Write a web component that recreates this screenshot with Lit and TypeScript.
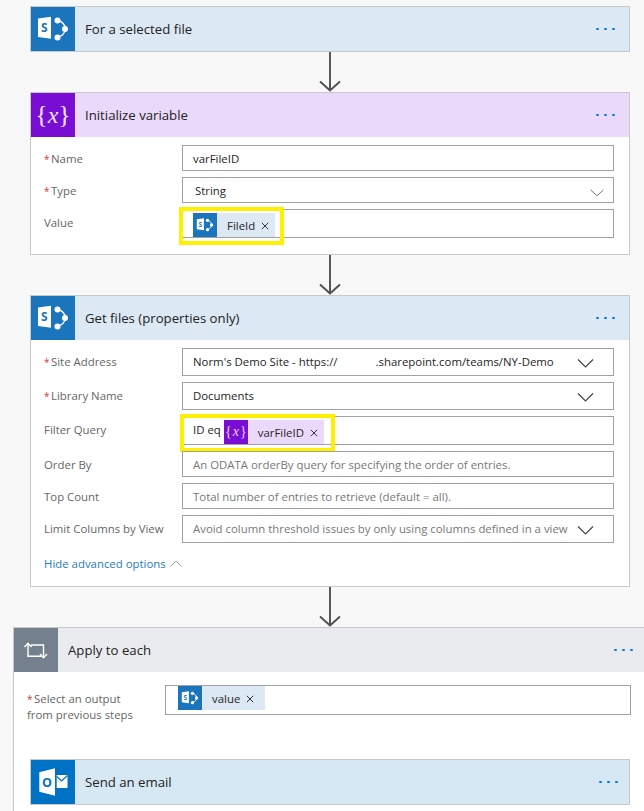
import { LitElement, html, css, svg } from "lit";
import { customElement } from "lit/decorators.js";

const sp = svg`<path d="M7 11.5 L20 9.8 V31.8 L7 30 Z" fill="#fff"/>
<text x="13.4" y="25" font-family="Open Sans, sans-serif" font-size="12" font-weight="700" text-anchor="middle" fill="#1a75bc">S</text>
<path d="M27 13.5 A 10 10 0 0 1 34.5 22 A 10 10 0 0 1 27 30" fill="none" stroke="#fff" stroke-width="1.4"/>
<circle cx="26.5" cy="13.5" r="3" fill="#fff"/><circle cx="34" cy="22" r="3" fill="#fff"/><circle cx="26.5" cy="30.5" r="3" fill="#fff"/>`;
const outlook = svg`<path d="M8.3 12.3 L24 8.3 V35.7 L8.3 31.7 Z" fill="#fff"/>
<text x="16" y="27" font-family="Open Sans, sans-serif" font-size="12.5" font-weight="700" text-anchor="middle" fill="#0072c6">O</text>
<rect x="25.7" y="15" width="10.8" height="13" fill="#fff"/><path d="M25.7 16.5 L30.6 21 L36.5 15.5" fill="none" stroke="#0072c6" stroke-width="1.2"/>`;
const loop = svg`<path d="M14 16 V28.2 H27.5 M17 17 H29.5 V29" fill="none" stroke="#fff" stroke-width="1.4"/>
<path d="M10.5 19 L14 15.3 L17.5 19 M26 26 L29.5 29.7 L33 26" fill="none" stroke="#fff" stroke-width="1.4"/>`;

const arrow = html`<div class="arrow"><svg width="22" height="40" viewBox="0 0 22 40"><path d="M11 0 V38.5 M1 29.5 L11 38.5 L21 29.5" fill="none" stroke="#505050" stroke-width="1.9"/></svg></div>`;
const chevron = html`<svg class="chev" width="17" height="11" viewBox="0 0 17 11"><path d="M1 1.5 L8.5 9 L16 1.5" fill="none" stroke="#444" stroke-width="1.2"/></svg>`;
const thinChev = html`<svg class="chev thin" width="14" height="8" viewBox="0 0 14 8"><path d="M.5 .8 L7 6.8 L13.5 .8" fill="none" stroke="#666" stroke-width=".9"/></svg>`;
const dots = html`<div class="dots"><i></i><i></i><i></i></div>`;
const spIcon = (s: number) => html`<svg class="ico" width=${s} height=${s} viewBox="0 0 44 44">${sp}</svg>`;
const cross = html`<svg class="x" width="8" height="8" viewBox="0 0 8 8"><path d="M.8 .8 L7.2 7.2 M7.2 .8 L.8 7.2" stroke="#333" stroke-width="1" fill="none"/></svg>`;

@customElement("app-root")
export class AppRoot extends LitElement {
  static styles = css`
    :host { display: block; width: 644px; height: 811px; overflow: hidden; background: #f8f8f8; font-family: "Open Sans", sans-serif; font-size: 11.4px; color: #252525; }
    .page { padding-top: 6px; display: flex; flex-direction: column; }
    .card { margin-left: 30px; width: 600px; box-sizing: border-box; border: 1px solid #c8c8c8; background: #fff; }
    .head { height: 44px; display: flex; align-items: center; }
    .head.sp { background: #dce8f4; } .head.var { background: #ead9fb; } .head.loop { background: #eaebef; } .head.ol { background: #d7e8f5; }
    .icon { width: 44px; height: 44px; flex: none; display: flex; align-items: center; justify-content: center; }
    .sp .icon { background: #1a75bc; } .var .icon { background: #7a0dd3; } .loop .icon { background: #75808f; } .ol .icon { background: #0072c6; }
    .ico { display: block; }
    .title { flex: 1; margin-left: 10px; font-size: 13.2px; color: #222; }
    .dots { display: flex; gap: 5.6px; margin-right: 14px; }
    .dots i { width: 2.6px; height: 2.6px; border-radius: 50%; background: #0a78e0; }
    .arrow { height: 40px; display: flex; justify-content: center; padding-left: 16px; }
    .arrow svg { display: block; }
    .body { display: flex; flex-direction: column; gap: 6px; padding: 8px 15px 16px 13px; }
    .body.adv { padding-bottom: 15px; }
    .row { display: grid; grid-template-columns: 138px 1fr; align-items: start; }
    .label { color: #666; padding-top: 6px; line-height: 16px; white-space: nowrap; }
    .star { color: #d8353b; display: inline-block; width: 7px; font-size: 10px; }
    .field { position: relative; box-sizing: border-box; height: 26px; border: 1px solid #a0a0a0; background: #fff; display: flex; align-items: center; padding-left: 10px; white-space: nowrap; }
    .h28 { height: 28px; padding-bottom: 2px; } .h29 { height: 29px; }
    .ph { color: #777; }
    .spaced { padding-left: 12px; }
    .gap { display: inline-block; width: 38px; }
    .chev { position: absolute; right: 19px; top: 9px; }
    .chev.thin { right: 9px; top: 11px; }
    .chip { display: flex; align-items: center; height: 24px; }
    .chip.sp { background: #dce8f4; } .chip.var { background: #ead9fb; }
    .chip .box { width: 24px; height: 24px; display: flex; align-items: center; justify-content: center; flex: none; }
    .chip.sp .box { background: #1a75bc; } .chip.var .box { background: #7a0dd3; }
    .chip .txt { margin-left: 10px; }
    .x { margin: 1px 6px 0 6px; display: block; flex: none; }
    .wide .x { margin-right: 11px; }
    .brace { color: #e8d8fa; font-family: "Liberation Serif", serif; font-size: 14px; }
    .brace em { padding: 0 1px; }
    .bigbrace { color: #efe4fb; font-family: "Liberation Serif", serif; font-size: 26px; line-height: 26px; }
    .bigbrace em { font-size: 24px; }
    .top3 { align-self: flex-start; margin-top: 3px; }
    .idq { margin-right: 3px; align-self: flex-start; margin-top: 5px; }
    .hl { position: absolute; box-sizing: border-box; border: 4px solid #ffef00; pointer-events: none; }
    .hl.a { left: -4px; top: -3px; width: 105px; height: 38px; }
    .hl.b { left: -3px; top: -3px; width: 155px; height: 38px; }
    .more { color: #2a7ac0; display: flex; align-items: center; gap: 4px; margin-top: 7px; }
    .outer { margin-left: 13px; border: 1px solid #c8c8c8; border-right: none; background: #fff; height: 190px; }
    .outer .dots { margin-right: 11px; }
    .select { display: grid; grid-template-columns: 138px 466px; padding: 13px 0 0 13px; align-items: start; }
    .select .label { padding-top: 6px; line-height: 15px; }
    .select .field { height: 30px; padding-left: 12px; }
    .select .chip { align-self: flex-start; }
    .inner { margin: 37px 0 0 16px; }
  `;

  render() {
    return html`<div class="page">
      <section class="card">
        <div class="head sp"><div class="icon">${spIcon(44)}</div><div class="title">For a selected file</div>${dots}</div>
      </section>
      ${arrow}
      <section class="card">
        <div class="head var"><div class="icon"><div class="bigbrace">{<em>x</em>}</div></div><div class="title">Initialize variable</div>${dots}</div>
        <div class="body">
          <div class="row"><div class="label"><span class="star">*</span>Name</div><div class="field">varFileID</div></div>
          <div class="row"><div class="label"><span class="star">*</span>Type</div><div class="field spaced">String${thinChev}</div></div>
          <div class="row"><div class="label">Value</div><div class="field h29">
            <div class="chip sp top3"><div class="box">${spIcon(24)}</div><span class="txt">FileId</span>${cross}</div>
            <div class="hl a"></div>
          </div></div>
        </div>
      </section>
      ${arrow}
      <section class="card">
        <div class="head sp"><div class="icon">${spIcon(44)}</div><div class="title">Get files (properties only)</div>${dots}</div>
        <div class="body adv">
          <div class="row"><div class="label"><span class="star">*</span>Site Address</div><div class="field h28">Norm's Demo Site - https://<span class="gap"></span>.sharepoint.com/teams/NY-Demo${chevron}</div></div>
          <div class="row"><div class="label"><span class="star">*</span>Library Name</div><div class="field h28">Documents${chevron}</div></div>
          <div class="row"><div class="label">Filter Query</div><div class="field h29">
            <span class="idq">ID eq</span>
            <div class="chip var top3"><div class="box"><span class="brace">{<em>x</em>}</span></div><span class="txt">varFileID</span>${cross}</div>
            <div class="hl b"></div>
          </div></div>
          <div class="row"><div class="label">Order By</div><div class="field ph">An ODATA orderBy query for specifying the order of entries.</div></div>
          <div class="row"><div class="label">Top Count</div><div class="field ph">Total number of entries to retrieve (default = all).</div></div>
          <div class="row"><div class="label">Limit Columns by View</div><div class="field h28 ph">Avoid column threshold issues by only using columns defined in a view${chevron}</div></div>
          <div class="more">Hide advanced options <svg width="12" height="7" viewBox="0 0 12 7"><path d="M.5 6.5 L6 1 L11.5 6.5" fill="none" stroke="#8aa8c4" stroke-width="1"/></svg></div>
        </div>
      </section>
      ${arrow}
      <section class="outer">
        <div class="head loop"><div class="icon"><svg class="ico" width="44" height="44" viewBox="0 0 44 44">${loop}</svg></div><div class="title">Apply to each</div>${dots}</div>
        <div class="select">
          <div class="label"><span class="star">*</span>Select an output<br />from previous steps</div>
          <div class="field"><div class="chip sp wide"><div class="box">${spIcon(24)}</div><span class="txt">value</span>${cross}</div></div>
        </div>
        <section class="card inner">
          <div class="head ol"><div class="icon"><svg class="ico" width="44" height="44" viewBox="0 0 44 44">${outlook}</svg></div><div class="title">Send an email</div>${dots}</div>
        </section>
      </section>
    </div>`;
  }
}
